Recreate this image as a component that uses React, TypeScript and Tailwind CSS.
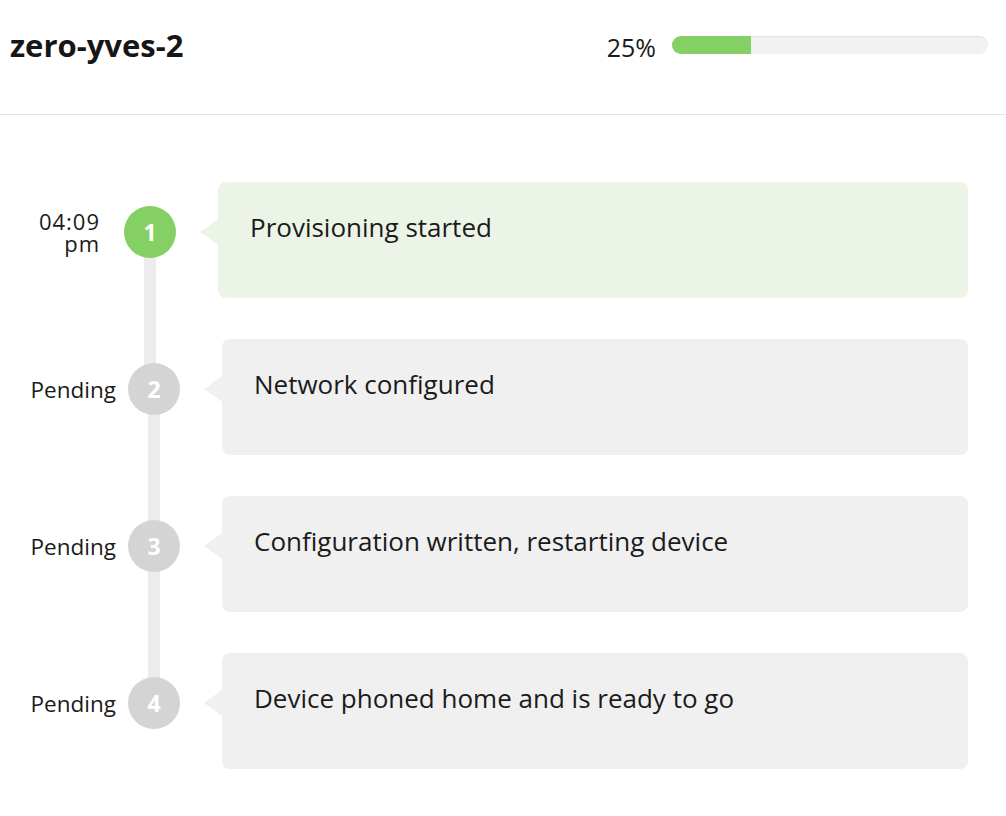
const steps = [
  { n: 1, label: ["04:09", "pm"], text: "Provisioning started", done: true },
  { n: 2, label: ["Pending"], text: "Network configured", done: false },
  { n: 3, label: ["Pending"], text: "Configuration written, restarting device", done: false },
  { n: 4, label: ["Pending"], text: "Device phoned home and is ready to go", done: false },
];

function Step({ step, last }: { step: (typeof steps)[number]; last: boolean }) {
  return (
    <div className={`flex items-start ${last ? "" : "pb-[41px]"}`}>
      {/* label + circle */}
      <div
        className={`mt-6 flex h-[52px] items-center ${step.done ? "gap-6" : "gap-3"}`}
      >
        <div
          className={`text-right text-[#1b1b1b] ${
            step.done
              ? "w-[100px] text-[22px] leading-[22px] tracking-[1px]"
              : "w-[116px] text-[22.5px] leading-[25px]"
          }`}
        >
          {step.label.map((l) => (
            <div key={l}>{l}</div>
          ))}
        </div>
        <div className="relative h-[52px] w-[52px]">
          {!last && (
            <div className="absolute left-[20px] top-[26px] h-[157px] w-3 bg-[#ececec]" />
          )}
          <div
            className={`relative flex h-[52px] w-[52px] items-center justify-center rounded-full text-[23px] font-bold text-white ${
              step.done ? "bg-[#84d065]" : "bg-[#d4d4d4]"
            }`}
          >
            {step.n}
          </div>
        </div>
      </div>

      {/* arrow + card */}
      <div className="ml-[24px] pt-[37px]">
        <div
          className={`h-0 w-0 border-y-[13px] border-r-[18px] border-y-transparent ${
            step.done ? "border-r-[#ecf4e8]" : "border-r-[#f0f0f0]"
          }`}
        />
      </div>
      <div
        className={`h-[116px] flex-1 rounded-lg px-8 pt-[29px] text-[26px] leading-8 text-[#1b1b1b] ${
          step.done ? "bg-[#ecf4e8]" : "bg-[#f0f0f0]"
        }`}
      >
        {step.text}
      </div>
    </div>
  );
}

export default function App() {
  return (
    <div className="min-h-[816px] bg-white font-['Open_Sans',sans-serif]">
      <header className="flex h-[115px] items-start justify-between border-b border-[#e4e4e4] pl-[10px] pr-[18px] pt-[22px]">
        <h1 className="text-[31px] font-bold leading-[46px] text-[#161616]">zero-yves-2</h1>
        <div className="mt-[6px] flex items-start gap-4">
          <span className="text-[25px] leading-[38px] text-[#1b1b1b]">25%</span>
          <div className="mt-[8px] h-[18px] w-[316px] overflow-hidden rounded-full bg-[#f2f2f2] shadow-[inset_0_1px_2px_rgba(0,0,0,0.08)]">
            <div className="h-full w-[25%] bg-[#84d065]" />
          </div>
        </div>
      </header>

      <main className="pr-[38px] pt-[67px]">
        {steps.map((s, i) => (
          <Step key={s.n} step={s} last={i === steps.length - 1} />
        ))}
      </main>
    </div>
  );
}
